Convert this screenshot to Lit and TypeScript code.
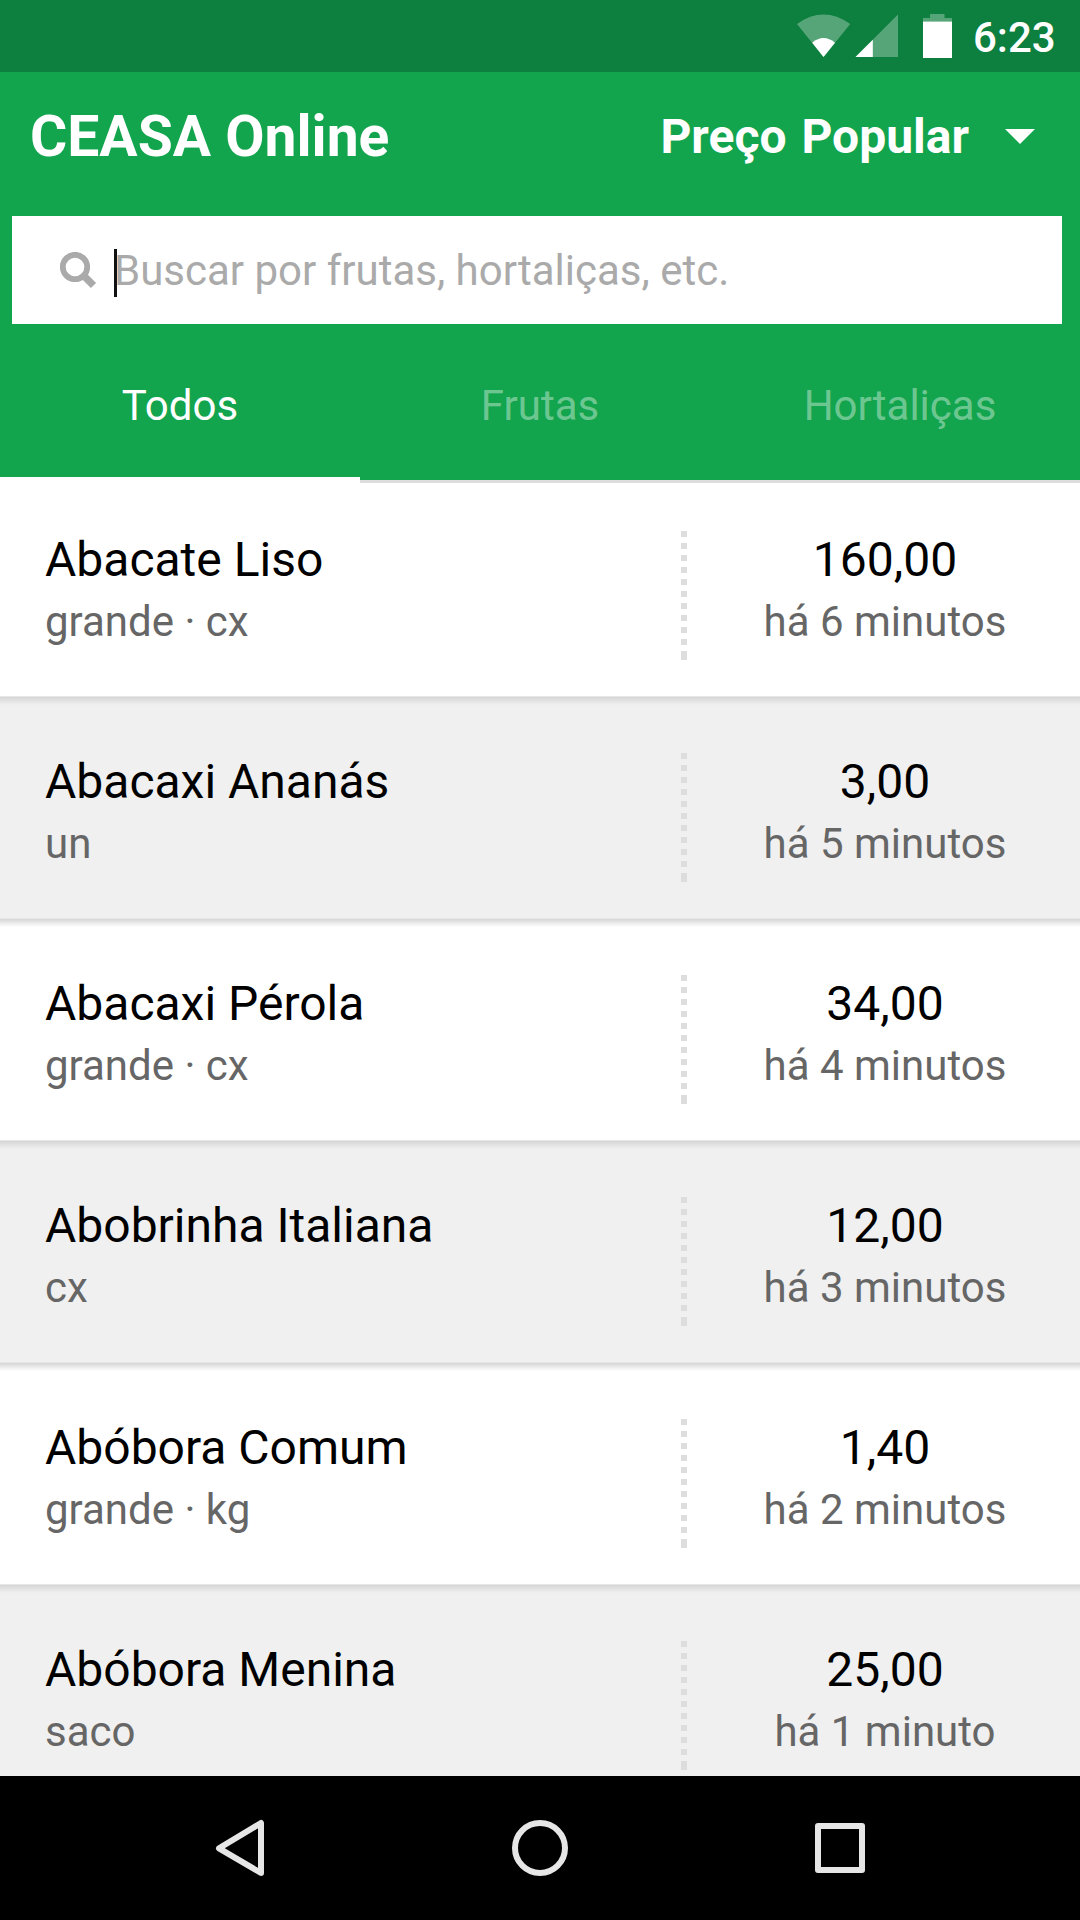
import { LitElement, html, css, svg } from "lit";
import { customElement, property, state } from "lit/decorators.js";

interface Produce {
  name: string;
  detail: string;
  price: string;
  updated: string;
}

const ITEMS: Produce[] = [
  { name: "Abacate Liso", detail: "grande · cx", price: "160,00", updated: "há 6 minutos" },
  { name: "Abacaxi Ananás", detail: "un", price: "3,00", updated: "há 5 minutos" },
  { name: "Abacaxi Pérola", detail: "grande · cx", price: "34,00", updated: "há 4 minutos" },
  { name: "Abobrinha Italiana", detail: "cx", price: "12,00", updated: "há 3 minutos" },
  { name: "Abóbora Comum", detail: "grande · kg", price: "1,40", updated: "há 2 minutos" },
  { name: "Abóbora Menina", detail: "saco", price: "25,00", updated: "há 1 minuto" },
];

@customElement("status-bar")
class StatusBar extends LitElement {
  static styles = css`
    :host {
      display: flex;
      height: 72px;
      flex: none;
      justify-content: flex-end;
      background: #0d7f3e;
      color: #fff;
    }
    .icons {
      display: block;
      width: 170px;
      height: 72px;
    }
    .clock {
      width: 107px;
      margin-left: 13px;
      font-size: 42px;
      font-weight: 500;
      line-height: 75px;
      white-space: nowrap;
    }
  `;
  render() {
    return html`
      <svg class="icons" viewBox="790 0 170 72" fill="#fff">
        <path fill-opacity=".3" d="M797 23.9Q823.5 5 850.2 23.9L823.5 57Z" />
        <path d="M812.2 42.7Q823.5 33.5 835 42.7L823.5 57Z" />
        <path fill-opacity=".3" d="M898 14.5V57H855.5Z" />
        <path d="M872.8 39.7V57H855.5Z" />
        <path fill-opacity=".3" d="M930 14H944.5V18H952V21.5H923V18H930Z" />
        <path d="M923 21.5H952V58H923Z" />
      </svg>
      <span class="clock">6:23</span>
    `;
  }
}

@customElement("app-header")
class AppHeader extends LitElement {
  static styles = css`
    :host {
      display: block;
      flex: none;
      background: #13a44e;
      color: #fff;
    }
    .bar {
      display: flex;
      justify-content: space-between;
      height: 144px;
      padding: 0 45px 0 30px;
      box-sizing: border-box;
      font-weight: 700;
      white-space: nowrap;
    }
    .title {
      font-size: 57px;
      line-height: 129px;
    }
    .picker {
      display: flex;
      font-size: 48px;
      line-height: 129px;
      word-spacing: 3px;
    }
    .arrow {
      width: 30px;
      height: 15px;
      margin: 57px 0 0 36px;
    }
    .search {
      display: flex;
      height: 108px;
      margin: 0 18px 0 12px;
      background: #fff;
      color: #aaa;
    }
    .lens {
      width: 37px;
      height: 37px;
      margin: 36px 0 0 48px;
    }
    .caret {
      width: 3px;
      height: 48px;
      margin: 33px 0 0 17px;
      background: #111;
    }
    .hint {
      margin-left: -3px;
      font-size: 42px;
      line-height: 109px;
      white-space: nowrap;
    }
    .tabs {
      display: grid;
      grid-template-columns: repeat(3, 1fr);
      height: 159px;
    }
    .tab {
      box-sizing: border-box;
      height: 159px;
      border-bottom: 3px solid #ddd;
      text-align: center;
      font-size: 42px;
      line-height: 163px;
      color: rgba(255, 255, 255, 0.4);
    }
    .tab.active {
      border-bottom: 6px solid #fff;
      color: #fff;
    }
  `;
  @state() private active = 0;
  render() {
    const tabs = ["Todos", "Frutas", "Hortaliças"];
    return html`
      <div class="bar">
        <span class="title">CEASA Online</span>
        <span class="picker">
          Preço Popular
          <svg class="arrow" viewBox="0 0 30 15" fill="#fff"><path d="M0 0H30L15 15Z" /></svg>
        </span>
      </div>
      <div class="search">
        <svg class="lens" viewBox="0 0 37 37" fill="none" stroke="#aaa">
          <circle cx="15" cy="15" r="12.2" stroke-width="5.8" />
          <path d="M23.5 23.5L33.5 33.5" stroke-width="7.4" />
        </svg>
        <span class="caret"></span>
        <span class="hint">Buscar por frutas, hortaliças, etc.</span>
      </div>
      <div class="tabs">
        ${tabs.map(
          (t, i) => html`<span
            class=${i === this.active ? "tab active" : "tab"}
            @click=${() => (this.active = i)}
            >${t}</span
          >`
        )}
      </div>
    `;
  }
}

@customElement("produce-row")
class ProduceRow extends LitElement {
  static styles = css`
    :host {
      display: flex;
      flex: none;
      box-sizing: border-box;
      height: 222px;
      padding-top: 56px;
      border-bottom: 1px solid #e6e6e6;
      background: linear-gradient(#d6d6d6, var(--row) 8px);
    }
    :host(.first) {
      height: 214px;
      padding-top: 48px;
      background: var(--row);
    }
    .info {
      box-sizing: border-box;
      width: 681px;
      padding-left: 45px;
    }
    .dots {
      display: block;
      width: 6px;
      height: 129px;
    }
    .price {
      box-sizing: border-box;
      width: 393px;
      padding-left: 3px;
      text-align: center;
    }
    .main {
      font-size: 48px;
      line-height: 57px;
      color: #000;
      white-space: nowrap;
    }
    .sub {
      margin-top: 9px;
      font-size: 42px;
      line-height: 50px;
      color: #666;
      white-space: nowrap;
    }
  `;
  @property({ attribute: false }) item!: Produce;
  render() {
    return html`
      <div class="info">
        <div class="main">${this.item.name}</div>
        <div class="sub">${this.item.detail}</div>
      </div>
      <svg class="dots" viewBox="0 0 6 129" fill="#ddd">
        ${Array.from({ length: 11 }, (_, i) => svg`<rect y=${i * 12} width="6" height=${i === 10 ? 9 : 6} />`)}
      </svg>
      <div class="price">
        <div class="main">${this.item.price}</div>
        <div class="sub">${this.item.updated}</div>
      </div>
    `;
  }
}

@customElement("nav-bar")
class NavBar extends LitElement {
  static styles = css`
    :host {
      display: flex;
      flex: none;
      height: 144px;
      justify-content: center;
      align-items: center;
      gap: 240px;
      background: #000;
    }
    .key {
      display: block;
      width: 60px;
      height: 60px;
    }
  `;
  render() {
    return html`
      <svg class="key" viewBox="0 0 60 60" fill="none" stroke="#e6e6e6" stroke-width="6" stroke-linejoin="round">
        <path d="M51 5V55L9 30.3Z" />
      </svg>
      <svg class="key" viewBox="0 0 60 60" fill="none" stroke="#e6e6e6" stroke-width="6">
        <circle cx="30" cy="30" r="25" />
      </svg>
      <svg class="key" viewBox="0 0 60 60" fill="none" stroke="#e6e6e6" stroke-width="6" stroke-linejoin="round">
        <rect x="8" y="8" width="44" height="44" />
      </svg>
    `;
  }
}

@customElement("app-root")
class AppRoot extends LitElement {
  static styles = css`
    :host {
      display: flex;
      flex-direction: column;
      width: 1080px;
      height: 1920px;
      overflow: hidden;
      font-family: Roboto, "Liberation Sans", sans-serif;
      background: #fff;
    }
    .list {
      display: flex;
      flex-direction: column;
      flex: 1;
      min-height: 0;
      overflow: hidden;
    }
    .odd {
      --row: #fff;
    }
    .even {
      --row: #f0f0f0;
    }
  `;
  render() {
    return html`
      <status-bar></status-bar>
      <app-header></app-header>
      <div class="list">
        ${ITEMS.map(
          (item, i) => html`<produce-row
            class="${i % 2 ? "even" : "odd"} ${i === 0 ? "first" : ""}"
            .item=${item}
          ></produce-row>`
        )}
      </div>
      <nav-bar></nav-bar>
    `;
  }
}
